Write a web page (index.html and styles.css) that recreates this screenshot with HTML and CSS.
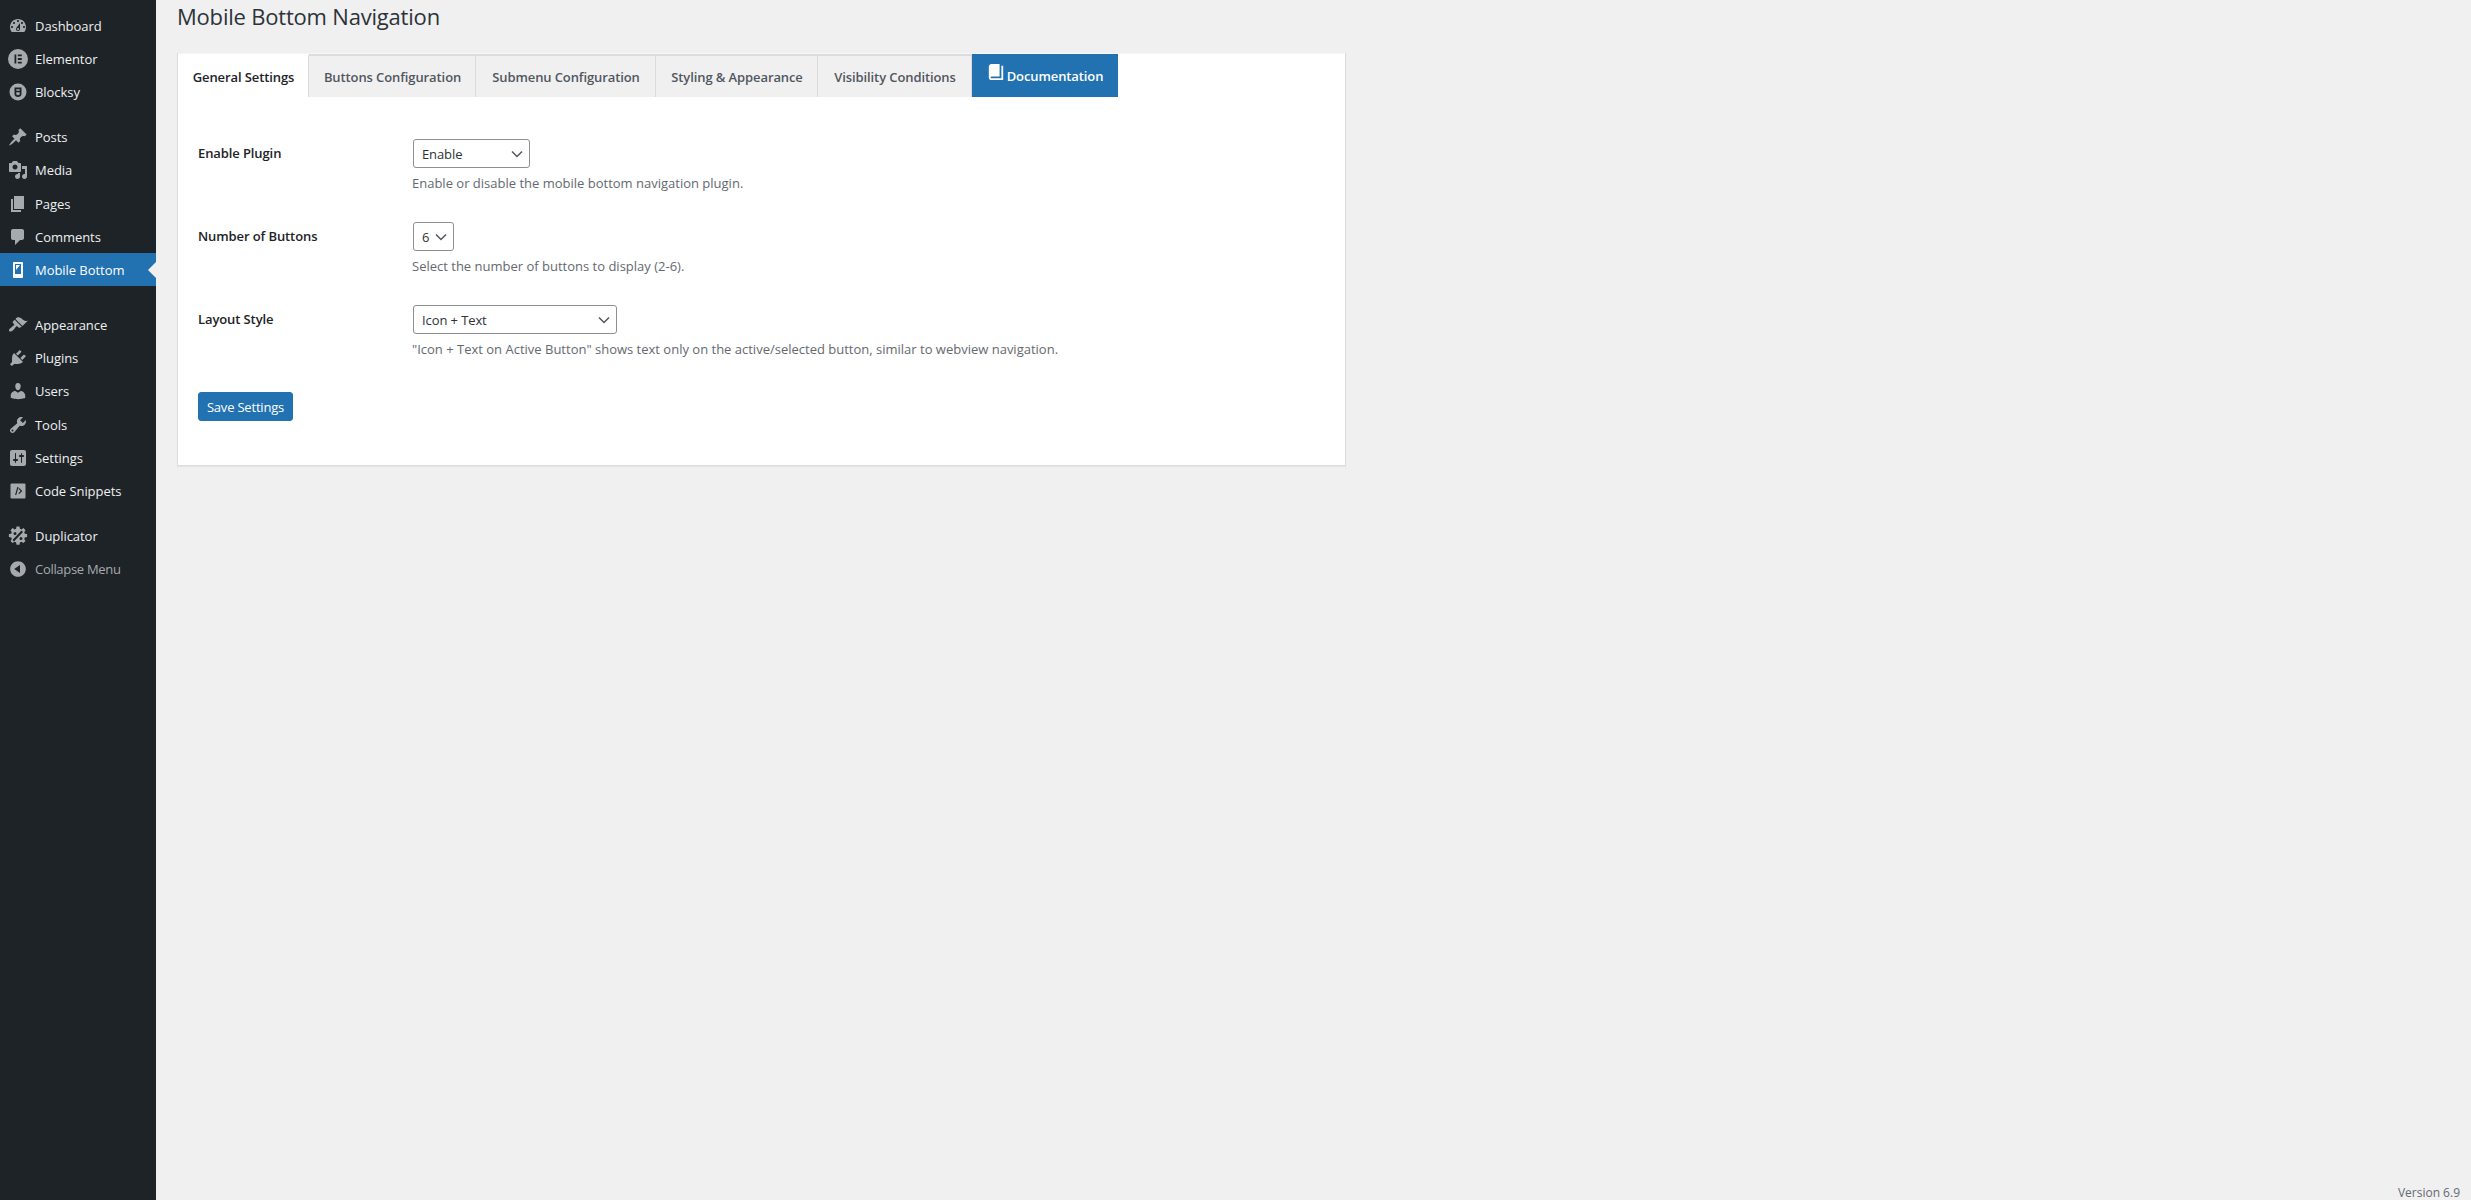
FILE: index.html
```html
<!DOCTYPE html>
<html lang="en">
<head>
<meta charset="utf-8">
<title>Mobile Bottom Navigation</title>
<link rel="stylesheet" href="styles.css">
</head>
<body>
<div class="layout">
  <nav class="sidebar">
    <ul class="menu-group">
      <li class="menu-item"><svg class="mi" viewBox="0 0 20 20"><path d="M3.760 16h12.480c1.100-1.370 1.760-3.110 1.760-5 0-4.420-3.580-8-8-8s-8 3.580-8 8c0 1.890.66 3.630 1.760 5zM10 4c.55 0 1 .45 1 1s-.45 1-1 1-1-.45-1-1 .45-1 1-1zM6 6c.55 0 1 .45 1 1s-.45 1-1 1-1-.45-1-1 .45-1 1-1zm8 0c.55 0 1 .45 1 1s-.45 1-1 1-1-.45-1-1 .45-1 1-1zm-5.370 5.550L12 7v6c0 1.100-.9 2-2 2s-2-.9-2-2c0-.57.24-1.080.63-1.450zM4 10c.55 0 1 .45 1 1s-.45 1-1 1-1-.45-1-1 .45-1 1-1zm12 0c.55 0 1 .45 1 1s-.45 1-1 1-1-.45-1-1 .45-1 1-1zm-5 3c0-.55-.45-1-1-1s-1 .45-1 1 .45 1 1 1 1-.45 1-1z"/></svg><span>Dashboard</span></li>
      <li class="menu-item"><svg class="mi" viewBox="0 0 20 20"><path fill-rule="evenodd" d="M10 0a10 10 0 1 0 0 20 10 10 0 0 0 0-20zM6.500 5.500h1.800v9H6.500zM9.800 5.500h4v1.800h-4zM9.800 9.100h4v1.800h-4zM9.800 12.700h4v1.800h-4z"/></svg><span>Elementor</span></li>
      <li class="menu-item"><svg class="mi" viewBox="0 0 20 20"><path fill-rule="evenodd" d="M10 1.500a8.500 8.500 0 1 0 0 17 8.500 8.500 0 0 0 0-17zM6.500 5.500h7v6.500c0 1.800-1.600 3-3.500 3s-3.500-1.200-3.500-3zM8.300 7.300v1.500h3.400V7.300zM8.300 10.300v1.700c0 .7.800 1.200 1.700 1.200s1.700-.5 1.700-1.200v-1.700z"/></svg><span>Blocksy</span></li>
    </ul>
    <ul class="menu-group">
      <li class="menu-item"><svg class="mi" viewBox="0 0 20 20"><path d="M10.440 3.020l1.820-1.820 6.360 6.350-1.830 1.820c-1.050-.68-2.480-.57-3.410.36l-.75.75c-.92.93-1.040 2.350-.35 3.410l-1.830 1.820-2.410-2.410-2.800 2.790c-.42.42-3.380 2.710-3.800 2.290s1.860-3.390 2.280-3.810l2.790-2.790L4.100 9.360l1.830-1.820c1.050.69 2.480.57 3.400-.36l.75-.75c.93-.92 1.050-2.350.36-3.410z"/></svg><span>Posts</span></li>
      <li class="menu-item"><svg class="mi" viewBox="0 0 20 20"><path d="M13 11V4c0-.55-.45-1-1-1h-1.670L9 1H5L3.670 3H2c-.55 0-1 .45-1 1v7c0 .55.45 1 1 1h10c.55 0 1-.45 1-1zM7 4.500c1.380 0 2.500 1.120 2.500 2.500S8.380 9.500 7 9.500 4.500 8.380 4.500 7 5.620 4.500 7 4.500zM14 6h5v10.500c0 1.380-1.120 2.500-2.500 2.500S14 17.880 14 16.500s1.120-2.500 2.500-2.500c.17 0 .34.02.5.05V9h-3V6zm-4 8.050V13h2v3.500c0 1.380-1.120 2.500-2.500 2.500S7 17.880 7 16.500 8.120 14 9.500 14c.17 0 .34.02.5.05z"/></svg><span>Media</span></li>
      <li class="menu-item"><svg class="mi" viewBox="0 0 20 20"><path d="M6 15V2h10v13H6zm-1 1h8v2H3V5h2v11z"/></svg><span>Pages</span></li>
      <li class="menu-item"><svg class="mi" viewBox="0 0 20 20"><path d="M5 2h9c1.100 0 2 .9 2 2v7c0 1.100-.9 2-2 2h-2l-5 5v-5H5c-1.100 0-2-.9-2-2V4c0-1.100.9-2 2-2z"/></svg><span>Comments</span></li>
      <li class="menu-item current"><svg class="mi" viewBox="0 0 20 20"><path d="M6 2h8c.55 0 1 .46 1 1v14c0 .55-.45 1-1 1H6c-.55 0-1-.45-1-1V3c0-.54.45-1 1-1zm7 12V4H7v10h6zM8 5h4l-4 5V5z"/></svg><span>Mobile Bottom</span></li>
    </ul>
    <ul class="menu-group after-current">
      <li class="menu-item"><svg class="mi" viewBox="0 0 20 20"><path d="M14.480 11.060L7.410 3.990l1.500-1.500c.5-.56 2.300-.47 3.510.32 1.210.8 1.430 1.280 2.910 2.100 1.180.64 2.450 1.260 4.450.85zm-.71.71L6.700 4.700 4.930 6.470c-.39.39-.39 1.020 0 1.410l1.060 1.060c.39.39.39 1.030 0 1.420-.6.6-1.430 1.110-2.210 1.690-.35.26-.7.53-1.010.84C1.430 13.230.4 15.240 1.320 16.160c.92.92 2.930-.09 4.270-1.440.31-.31.58-.66.85-1.010.58-.78 1.090-1.610 1.690-2.210.39-.39 1.020-.39 1.410 0l1.060 1.060c.39.39 1.020.39 1.410 0z"/></svg><span>Appearance</span></li>
      <li class="menu-item"><svg class="mi" viewBox="0 0 20 20"><path d="M13.110 4.360L9.870 7.600 8 5.730l3.240-3.240c.35-.34 1.050-.2 1.560.32.52.51.66 1.210.31 1.550zm-8 1.770l.91-1.120 9.010 9.010-1.190.84c-.71.71-2.630 1.160-3.820 1.160H6.140L4.900 17.260c-.59.59-1.540.59-2.120 0-.59-.58-.59-1.530 0-2.120l1.240-1.240v-3.880c0-1.130.4-3.190 1.090-3.890zm7.260 3.970l3.240-3.240c.34-.35 1.040-.21 1.550.31.52.51.66 1.210.31 1.550l-3.240 3.250z"/></svg><span>Plugins</span></li>
      <li class="menu-item"><svg class="mi" viewBox="0 0 20 20"><path d="M10 9.250c-2.270 0-2.730-3.440-2.730-3.440C7 4.020 7.820 2 9.970 2c2.160 0 2.980 2.020 2.710 3.810 0 0-.41 3.440-2.680 3.440zm0 2.570L12.720 10c2.390 0 4.520 2.330 4.520 4.530v2.490s-3.650 1.130-7.240 1.130c-3.650 0-7.240-1.130-7.240-1.130v-2.490c0-2.250 1.940-4.480 4.470-4.480z"/></svg><span>Users</span></li>
      <li class="menu-item"><svg class="mi" viewBox="0 0 20 20"><path d="M16.680 9.770c-1.340 1.340-3.300 1.670-4.950.99l-5.410 6.520c-.99.99-2.590.99-3.580 0s-.99-2.590 0-3.570l6.520-5.420c-.68-1.650-.35-3.610.99-4.950 1.280-1.280 3.120-1.620 4.720-1.060l-2.890 2.890 2.820 2.820 2.860-2.870c.53 1.580.18 3.390-1.080 4.650zM3.810 16.210c.4.39 1.040.39 1.430 0 .4-.4.4-1.040 0-1.430-.39-.4-1.030-.4-1.430 0-.39.39-.39 1.030 0 1.430z"/></svg><span>Tools</span></li>
      <li class="menu-item"><svg class="mi" viewBox="0 0 20 20"><path d="M18 16V4c0-1.100-.9-2-2-2H4c-1.100 0-2 .9-2 2v12c0 1.100.9 2 2 2h12c1.100 0 2-.9 2-2zM8 11h1c.55 0 1 .45 1 1s-.45 1-1 1H8v1.500c0 .28-.22.5-.5.5s-.5-.22-.5-.5V13H6c-.55 0-1-.45-1-1s.45-1 1-1h1V5.500c0-.28.22-.5.5-.5s.5.22.5.5V11zm5-2h-1c-.55 0-1-.45-1-1s.45-1 1-1h1V5.500c0-.28.22-.5.5-.5s.5.22.5.5V7h1c.55 0 1 .45 1 1s-.45 1-1 1h-1v5.500c0 .28-.22.5-.5.5s-.5-.22-.5-.5V9z"/></svg><span>Settings</span></li>
      <li class="menu-item"><svg class="mi" viewBox="0 0 20 20"><path fill-rule="evenodd" d="M3.500 2.500h13a1 1 0 0 1 1 1v13a1 1 0 0 1-1 1h-13a1 1 0 0 1-1-1v-13a1 1 0 0 1 1-1zM9.300 6l-2.200 8h1.200l2.200-8zM11.200 7l-.8.800 2.300 2.200-2.300 2.200.8.800 3.100-3z"/></svg><span>Code Snippets</span></li>
    </ul>
    <ul class="menu-group">
      <li class="menu-item"><svg class="mi" viewBox="0 0 20 20"><path fill-rule="evenodd" d="M8.500 0.500h3l.4 2.300 1.500.6 2-1.300 2.100 2.100-1.300 2 .6 1.500 2.300.4v3l-2.300.4-.6 1.500 1.300 2-2.100 2.100-2-1.300-1.500.6-.4 2.300h-3l-.4-2.300-1.500-.6-2 1.300-2.100-2.100 1.300-2-.6-1.500-2.300-.4v-3l2.300-.4.6-1.500-1.300-2 2.100-2.100 2 1.300 1.500-.6zM5.500 7.500a1.500 1.500 0 1 0 3 0 1.500 1.500 0 0 0-3 0zM11.500 12.500a1.500 1.500 0 1 0 3 0 1.500 1.500 0 0 0-3 0zM13.500 4.500L4.500 14l1.500 1.500 9-9.500z"/></svg><span>Duplicator</span></li>
      <li class="menu-item collapse"><svg class="mi" viewBox="0 0 20 20"><path d="M10 2.160c4.330 0 7.840 3.510 7.840 7.840s-3.510 7.840-7.840 7.840S2.160 14.330 2.160 10 5.710 2.160 10 2.160zm2 11.720V6.120L6.180 9.970z"/></svg><span>Collapse Menu</span></li>
    </ul>
  </nav>
  <main class="main">
    <h1 class="page-title">Mobile Bottom Navigation</h1>
    <section class="card">
      <div class="tabs">
        <a class="tab active">General Settings</a>
        <a class="tab">Buttons Configuration</a>
        <a class="tab">Submenu Configuration</a>
        <a class="tab">Styling &amp; Appearance</a>
        <a class="tab">Visibility Conditions</a>
        <a class="tab doc"><svg class="book" viewBox="0 0 20 20"><path d="M16 3h2v16H5c-1.660 0-3-1.340-3-3V4c0-1.660 1.340-3 3-3h9v14H5c-.55 0-1 .45-1 1s.45 1 1 1h11V3z"/></svg>Documentation</a>
      </div>
      <form class="panel">
        <div class="row">
          <label class="label">Enable Plugin</label>
          <div class="field">
            <select class="select s-enable"><option>Enable</option><option>Disable</option></select>
            <p class="hint">Enable or disable the mobile bottom navigation plugin.</p>
          </div>
        </div>
        <div class="row">
          <label class="label">Number of Buttons</label>
          <div class="field">
            <select class="select s-number"><option>6</option></select>
            <p class="hint">Select the number of buttons to display (2-6).</p>
          </div>
        </div>
        <div class="row">
          <label class="label">Layout Style</label>
          <div class="field">
            <select class="select s-layout"><option>Icon + Text</option></select>
            <p class="hint">"Icon + Text on Active Button" shows text only on the active/selected button, similar to webview navigation.</p>
          </div>
        </div>
        <button type="button" class="save">Save Settings</button>
      </form>
    </section>
    <footer class="footer">Version 6.9</footer>
  </main>
</div>
</body>
</html>
```
FILE: styles.css
```css
* { box-sizing: border-box; }
html, body { margin: 0; height: 100%; }
body {
  background: #f0f0f1;
  color: #3c434a;
  font-family: "Open Sans", "Noto Sans", sans-serif;
  font-size: 13px;
  overflow: hidden;
}
.layout { display: flex; height: 1200px; }
.sidebar {
  flex: 0 0 156px;
  background: #1d2327;
  padding-top: 9.4px;
}
.menu-group { list-style: none; margin: 0 0 11.6px; padding: 0; }
.menu-group.after-current { margin-top: 22px; }
.menu-item {
  display: flex;
  align-items: center;
  height: 33.2px;
  padding-left: 8px;
  gap: 7px;
  color: #f0f0f1;
  font-size: 13px;
  position: relative;
  letter-spacing: -0.05px;
}
.mi { width: 20px; height: 20px; fill: #a7aaad; flex: none; }
.current { background: #2271b1; color: #fff; }
.current .mi { fill: #fff; }
.current::after {
  content: "";
  position: absolute;
  right: 0;
  top: 50%;
  margin-top: -8px;
  border: 8px solid transparent;
  border-right-color: #f0f0f1;
  border-left-width: 0;
}
.collapse { color: #a7aaad; letter-spacing: -0.3px; }
.main {
  flex: 1;
  display: flex;
  flex-direction: column;
  padding: 0 11px 0 21px;
  min-width: 0;
}
.page-title {
  margin: 0;
  padding-top: 2px;
  height: 53px;
  font-size: 22px;
  line-height: 29px;
  font-weight: 400;
  letter-spacing: -0.2px;
  color: #2c3338;
}
.card {
  width: 1169px;
  background: #fff;
  border: 1px solid #dcdcde;
  border-top: 0;
  box-shadow: 0 1px 1px rgba(0,0,0,.04);
}
.tabs {
  display: grid;
  grid-template-columns: 131px 167px 180px 162px 154px 146px;
  height: 44px;
  border-top: 1px solid #f6f7f7;
}
.tab {
  display: flex;
  align-items: center;
  justify-content: center;
  padding-left: 1px;
  background: #f0f0f1;
  border-top: 2px solid #dcdcde;
  border-right: 1px solid #dcdcde;
  color: #50575e;
  font-weight: 600;
  font-size: 13px;
  letter-spacing: -0.1px;
}
.tab.active { background: #fff; color: #1d2327; border-top-color: #fff; }
.tab.doc {
  background: #2271b1;
  border: 0;
  color: #fff;
  gap: 2px;
  padding-left: 0;
}
.book { width: 18px; height: 18px; fill: #fff; margin-top: -7px; }
.panel { padding: 42px 19px 44px 20px; display: flex; flex-direction: column; align-items: flex-start; }
.row { display: flex; align-items: flex-start; margin-bottom: 30px; width: 100%; }
.label {
  flex: 0 0 215px;
  line-height: 29px;
  font-weight: 600;
  color: #1d2327;
  letter-spacing: -0.1px;
}
.field { display: flex; flex-direction: column; align-items: flex-start; }
.select {
  appearance: none;
  height: 29px;
  padding: 0 24px 0 8px;
  background: #fff url("data:image/svg+xml,%3Csvg xmlns='http://www.w3.org/2000/svg' width='16' height='16' viewBox='0 0 16 16'%3E%3Cpath d='M3 5.500l5 5 5-5' fill='none' stroke='%2350575e' stroke-width='1.500'/%3E%3C/svg%3E") no-repeat right 4px center;
  border: 1px solid #8c8f94;
  border-radius: 3px;
  color: #2c3338;
  font: 13px "Open Sans", "Noto Sans", sans-serif;
  letter-spacing: -0.1px;
}
.s-enable { width: 117px; }
.s-number { width: 41px; padding-right: 18px; }
.s-layout { width: 204px; }
.hint {
  margin: 6px 0 0 -1px;
  line-height: 18px;
  color: #646970;
}
.save {
  margin-top: 4px;
  width: 95px;
  height: 29px;
  padding: 0;
  background: #2271b1;
  border: 1px solid #2271b1;
  border-radius: 3px;
  color: #fff;
  font: 13px "Open Sans", "Noto Sans", sans-serif;
  letter-spacing: -0.2px;
}
.footer {
  margin-top: auto;
  text-align: right;
  height: 15px;
  line-height: 15px;
  font-size: 12px;
  color: #646970;
}
```
